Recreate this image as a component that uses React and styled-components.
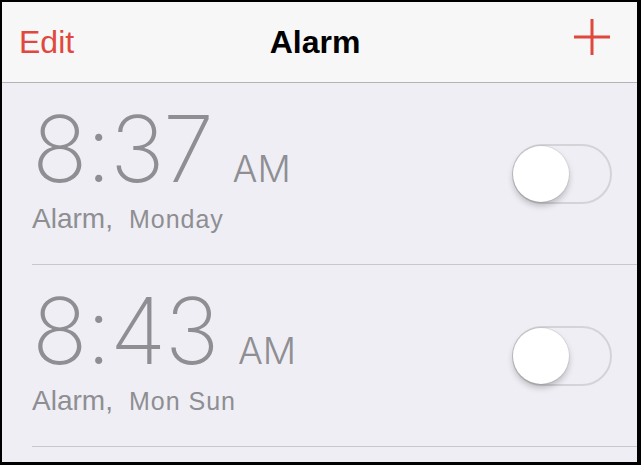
import React from 'react';
import styled, { createGlobalStyle } from 'styled-components';

const GlobalStyle = createGlobalStyle`
  html, body {
    margin: 0;
    padding: 0;
    background: #000;
  }
  #root {
    width: 641px;
    height: 465px;
  }
`;

const alarms = [
  { time: '8:37', meridiem: 'AM', label: 'Alarm', days: 'Monday' },
  { time: '8:43', meridiem: 'AM', label: 'Alarm', days: 'Mon Sun' },
];

export default function App() {
  return (
    <>
      <GlobalStyle />
      <Screen>
        <NavBar>
          <NavButton>Edit</NavButton>
          <Title>Alarm</Title>
          <AddButton aria-label="Add alarm">
            <svg width="38" height="38" viewBox="0 0 38 38">
              <path d="M19 1v36M1 19h36" stroke="#e0483e" strokeWidth="3" fill="none" />
            </svg>
          </AddButton>
        </NavBar>
        <List>
          {alarms.map((a) => (
            <Row key={a.time}>
              <Info>
                <TimeLine>
                  <Time>{a.time}</Time>
                  <Meridiem>{a.meridiem}</Meridiem>
                </TimeLine>
                <Subtitle>
                  {a.label},<Days>{a.days}</Days>
                </Subtitle>
              </Info>
              <Toggle />
            </Row>
          ))}
        </List>
      </Screen>
    </>
  );
}

const Screen = styled.div`
  margin: 2px 4px 3px 2px;
  width: 635px;
  height: 460px;
  background: #efeef4;
  display: flex;
  flex-direction: column;
  overflow: hidden;
`;

const NavBar = styled.header`
  height: 80px;
  flex-shrink: 0;
  background: #f7f7f8;
  border-bottom: 1px solid #b4b4b8;
  display: grid;
  grid-template-columns: 1fr auto 1fr;
  align-items: center;
  padding: 0 26px 0 17px;
  font-family: "Liberation Sans", Arial, sans-serif;
`;

const NavButton = styled.span`
  color: #e0483e;
  font-size: 32px;
  line-height: 1;
  justify-self: start;
`;

const Title = styled.h1`
  margin: 0;
  font-size: 32px;
  font-weight: 700;
  line-height: 1;
  color: #000;
`;

const AddButton = styled.span`
  justify-self: end;
  display: flex;
  margin-top: -10px;
`;

const List = styled.ul`
  list-style: none;
  margin: 0;
  padding: 0 0 0 30px;
`;

const Row = styled.li`
  height: 181px;
  border-bottom: 1px solid #c8c7cc;
  display: flex;
  align-items: center;
  justify-content: space-between;
  padding-right: 25px;
`;

const Info = styled.div`
  display: flex;
  flex-direction: column;
  color: #8e8e93;
  margin-top: -2px;
`;

const TimeLine = styled.div`
  display: flex;
  align-items: baseline;
  gap: 20px;
`;

const Time = styled.span`
  font-family: Inter, "Liberation Sans", sans-serif;
  font-weight: 200;
  font-size: 92px;
  line-height: 78px;
  letter-spacing: -1.5px;
`;

const Meridiem = styled.span`
  font-family: Inter, "Liberation Sans", sans-serif;
  font-weight: 300;
  font-size: 37px;
  line-height: 40px;
`;

const Subtitle = styled.div`
  font-family: "Liberation Sans", Arial, sans-serif;
  font-size: 28px;
  line-height: 32px;
  margin-top: 14px;
`;

const Days = styled.span`
  font-size: 25px;
  margin-left: 16px;
  letter-spacing: 1px;
`;

const Toggle = styled.div`
  position: relative;
  width: 96px;
  height: 56px;
  border: 2px solid #d4d3d8;
  border-radius: 30px;
  background: #efeef4;
  &::after {
    content: '';
    position: absolute;
    left: -1px;
    top: 0;
    width: 56px;
    height: 56px;
    border-radius: 50%;
    background: #fff;
    box-shadow: 0 4px 6px rgba(0, 0, 0, 0.22), 0 0 0 1px rgba(0, 0, 0, 0.06);
  }
`;
